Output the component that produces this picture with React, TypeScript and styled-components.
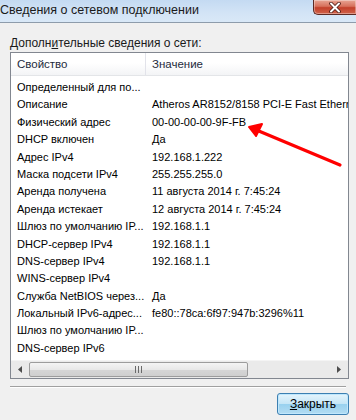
import React from "react";
import styled, { createGlobalStyle } from "styled-components";

const GlobalStyle = createGlobalStyle`
  html, body {
    margin: 0;
    padding: 0;
    background: #f0f0f0;
  }
`;

// Whole dialog window
const Window = styled.div`
  position: relative;
  width: 356px;
  height: 420px;
  overflow: hidden;
  display: flex;
  flex-direction: column;
  background: #f0f0f0;
  font-family: "Liberation Sans", Arial, sans-serif;
  color: #000;
`;

// Aero title bar
const TitleBar = styled.div`
  height: 22px;
  flex: none;
  display: flex;
  align-items: flex-start;
  justify-content: space-between;
  background: linear-gradient(180deg, #c4daf2 0%, #d3e4f6 60%, #d9e8f7 100%);
  border-bottom: 1px solid #8e9cab;
`;

const TitleText = styled.span`
  font-size: 12.5px;
  line-height: 20px;
  color: #1a1a1a;
  white-space: nowrap;
`;

const CloseButton = styled.div`
  width: 43px;
  height: 15px;
  box-sizing: border-box;
  display: flex;
  align-items: center;
  justify-content: center;
  border: 1px solid #5c2a24;
  border-top: none;
  border-right: none;
  border-bottom-left-radius: 5px;
  background: linear-gradient(180deg, #e8a594 0%, #d7715c 45%, #c3402a 55%, #d0634a 100%);
  box-shadow: inset 0 0 0 1px rgba(255, 255, 255, 0.35);
`;

// Dialog content area
const Body = styled.div`
  flex: 1;
  display: flex;
  flex-direction: column;
  padding: 13px 7px 0 10px;
`;

const GroupLabel = styled.div`
  font-size: 12px;
  line-height: 14px;
  color: #1a1a1a;
  margin-bottom: 2px;
  u {
    text-decoration: underline;
  }
`;

// List view box
const ListBox = styled.div`
  height: 327px;
  box-sizing: border-box;
  border: 1px solid #828790;
  background: #fff;
  display: flex;
  flex-direction: column;
`;

const HeaderRow = styled.div`
  height: 22px;
  flex: none;
  display: grid;
  grid-template-columns: 135px 1fr;
  background: linear-gradient(180deg, #ffffff 0%, #ffffff 45%, #f3f4f6 100%);
  border-bottom: 1px solid #e3e5e8;
`;

const HeaderCell = styled.div<{ $divider?: boolean }>`
  padding-left: 6px;
  font-size: 11.5px;
  line-height: 22px;
  color: #1e2b3c;
  border-right: ${(p) => (p.$divider ? "1px solid #e2e3ea" : "none")};
`;

const Rows = styled.div`
  flex: 1;
  overflow: hidden;
  padding-top: 3px;
`;

const Row = styled.div`
  display: grid;
  grid-template-columns: 135px 1fr;
  height: 17.4px;
  font-size: 11px;
  line-height: 17.4px;
  white-space: nowrap;
`;

const Cell = styled.div`
  padding-left: 6px;
  overflow: hidden;
`;

// Horizontal scrollbar
const ScrollBar = styled.div`
  height: 17px;
  flex: none;
  display: flex;
  align-items: center;
  background: #eaeaea;
  border-top: 1px solid #f4f4f4;
`;

const ArrowBtn = styled.div`
  width: 18px;
  height: 17px;
  flex: none;
  display: flex;
  align-items: center;
  justify-content: center;
`;

const Track = styled.div`
  flex: 1;
  height: 17px;
  display: flex;
  align-items: center;
`;

const Thumb = styled.div`
  width: 219px;
  height: 15px;
  box-sizing: border-box;
  border: 1px solid #9c9c9c;
  border-radius: 2px;
  background: linear-gradient(180deg, #f4f4f4 0%, #e8e8e8 50%, #d6d6d6 51%, #cfcfcf 100%);
  display: flex;
  align-items: center;
  justify-content: center;
`;

const Grip = styled.div`
  width: 7px;
  height: 7px;
  background: repeating-linear-gradient(90deg, #6a6a6a 0 1px, transparent 1px 3px);
`;

const Separator = styled.div`
  margin-top: 7px;
  margin-right: 3px;
  height: 0;
  border-top: 1px solid #a0a0a0;
  border-bottom: 1px solid #ffffff;
`;

const Footer = styled.div`
  display: flex;
  justify-content: flex-end;
  padding-top: 5px;
`;

const Button = styled.div`
  width: 72px;
  height: 22px;
  box-sizing: border-box;
  border: 1px solid #3c7fb1;
  border-radius: 3px;
  background: linear-gradient(180deg, #e5f4fc 0%, #c4e5f6 50%, #98d1ef 51%, #b3dcf2 100%);
  box-shadow: inset 0 0 0 1px #bfe7fd;
  font-size: 12px;
  line-height: 20px;
  text-align: center;
  color: #000;
  u {
    text-decoration: underline;
  }
`;

// Red annotation arrow drawn over the window
const Annotation = styled.svg`
  position: absolute;
  left: 0;
  top: 0;
  pointer-events: none;
`;

const rows: [string, string][] = [
  ["Определенный для по...", ""],
  ["Описание", "Atheros AR8152/8158 PCI-E Fast Ethernet"],
  ["Физический адрес", "00-00-00-00-9F-FB"],
  ["DHCP включен", "Да"],
  ["Адрес IPv4", "192.168.1.222"],
  ["Маска подсети IPv4", "255.255.255.0"],
  ["Аренда получена", "11 августа 2014 г. 7:45:24"],
  ["Аренда истекает", "12 августа 2014 г. 7:45:24"],
  ["Шлюз по умолчанию IP...", "192.168.1.1"],
  ["DHCP-сервер IPv4", "192.168.1.1"],
  ["DNS-сервер IPv4", "192.168.1.1"],
  ["WINS-сервер IPv4", ""],
  ["Служба NetBIOS через...", "Да"],
  ["Локальный IPv6-адрес...", "fe80::78ca:6f97:947b:3296%11"],
  ["Шлюз по умолчанию IP...", ""],
  ["DNS-сервер IPv6", ""],
];

const App = () => (
  <Window>
    <GlobalStyle />
    <TitleBar>
      <TitleText>Сведения о сетевом подключении</TitleText>
      <CloseButton>
        <svg width="12" height="11" viewBox="0 0 12 11">
          <path d="M2 1.5 L10 9.5 M10 1.5 L2 9.5" stroke="#4a1a14" strokeWidth="3.6" strokeLinecap="round" />
          <path d="M2 1.5 L10 9.5 M10 1.5 L2 9.5" stroke="#ffffff" strokeWidth="2" strokeLinecap="round" />
        </svg>
      </CloseButton>
    </TitleBar>

    <Body>
      <GroupLabel>
        Дополн<u>и</u>тельные сведения о сети:
      </GroupLabel>

      <ListBox>
        <HeaderRow>
          <HeaderCell $divider>Свойство</HeaderCell>
          <HeaderCell>Значение</HeaderCell>
        </HeaderRow>
        <Rows>
          {rows.map(([name, value], i) => (
            <Row key={i}>
              <Cell>{name}</Cell>
              <Cell>{value}</Cell>
            </Row>
          ))}
        </Rows>
        <ScrollBar>
          <ArrowBtn>
            <svg width="4" height="7" viewBox="0 0 4 7">
              <path d="M4 0 L0 3.5 L4 7 Z" fill="#4d4d4d" />
            </svg>
          </ArrowBtn>
          <Track>
            <Thumb>
              <Grip />
            </Thumb>
          </Track>
          <ArrowBtn>
            <svg width="4" height="7" viewBox="0 0 4 7">
              <path d="M0 0 L4 3.5 L0 7 Z" fill="#4d4d4d" />
            </svg>
          </ArrowBtn>
        </ScrollBar>
      </ListBox>

      <Separator />

      <Footer>
        <Button>
          <u>З</u>акрыть
        </Button>
      </Footer>
    </Body>

    <Annotation width="356" height="420">
      <line x1="340" y1="165" x2="254" y2="129" stroke="#ff0000" strokeWidth="3.2" strokeLinecap="round" />
      <path d="M249 127 L262 124 L256 136 Z" fill="#ff0000" stroke="#ff0000" strokeWidth="2" strokeLinejoin="round" />
    </Annotation>
  </Window>
);

export default App;
